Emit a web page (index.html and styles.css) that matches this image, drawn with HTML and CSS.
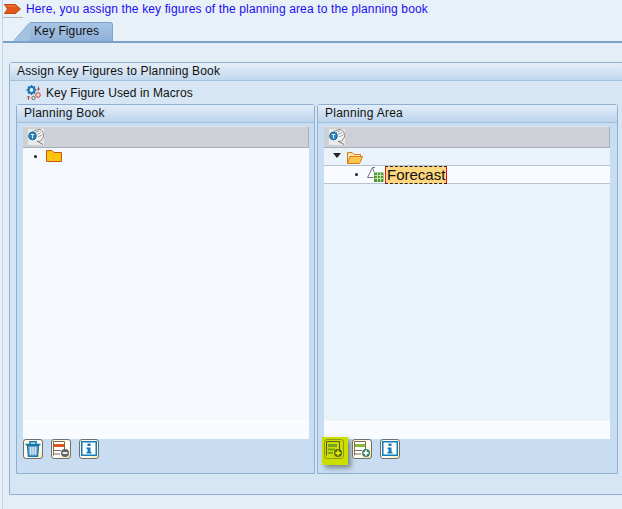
FILE: index.html
```html
<!DOCTYPE html>
<html lang="en">
  <head>
    <meta charset="UTF-8" />
    <title>Key Figures</title>
    <link rel="stylesheet" href="styles.css">
  </head>

  <body>
    <div class="message">
      <span class="message-mark">
        <svg width="17" height="10" viewBox="0 0 17 10"><path d="M0.5 0.5H11.5L16.5 5L11.5 9.5H0.5L3.5 5Z" fill="#e2571a" stroke="#c2470f"/><path d="M2.5 2H11" stroke="#f08a4a"/></svg>
      </span>
      <span class="message-text">Here, you assign the key figures of the planning area to the planning book</span>
    </div>

    <div class="tabs">
      <div class="tab">
        <svg class="tab-slope" width="16" height="19" viewBox="0 0 16 19"><path d="M0 19L16 1V19Z" fill="#a4c1e1"/><path d="M0 18.5L15.5 1" stroke="#7fa3ca" fill="none"/></svg>
        <span class="tab-label">Key Figures</span>
      </div>
    </div>

    <div class="tab-body">
      <div class="group">
        <div class="group-title">Assign Key Figures to Planning Book</div>
        <div class="group-tools">
          <svg width="16" height="16" viewBox="0 0 16 16">
            <circle cx="5.5" cy="5" r="3" fill="#e6f1f9" stroke="#1f78b4" stroke-width="2.2"/>
            <path d="M5.5 0V2M5.5 8V10M0.5 5H2.5M8.5 5H10.5M2 1.5L3.4 2.9M7.6 7.1L9 8.5M9 1.5L7.6 2.9M3.4 7.1L2 8.5" stroke="#1f78b4" stroke-width="1.5"/>
            <circle cx="12" cy="10" r="2.3" fill="#f6dcd6" stroke="#c8432c"/>
            <circle cx="7.5" cy="13" r="1.7" fill="none" stroke="#6f6a66"/>
            <path d="M12.5 1.5V5M11 3.6L12.5 5L14 3.6" fill="none" stroke="#c8432c"/>
            <path d="M2.5 11V15M1 12.5L2.5 11L4 12.5" fill="none" stroke="#c8432c"/>
          </svg>
          <span>Key Figure Used in Macros</span>
        </div>

        <div class="panels">
          <section class="panel">
            <div class="panel-title">Planning Book</div>
            <div class="tree">
              <div class="tree-head">
                <span class="tree-search">
                  <svg width="16" height="16" viewBox="0 0 16 16"><path d="M3 3.5L8 1L12 0.5L15 3L15.5 8L12.5 12L9 12.5" fill="#f4f4f4" stroke="#8b8b8b"/><path d="M7 3.5L11 2M9 5.5L13 3.5M10 8L14 6" stroke="#a5a5a5"/><path d="M9 12L15 15.5" stroke="#777"/><circle cx="4.5" cy="7" r="3.8" fill="#2f86c4" stroke="#1a5f94"/><path d="M2.8 5.5H6.2M4.5 5.5V9.5" stroke="#d7ecfa"/></svg>
                </span>
              </div>
              <div class="tree-rows">
                <div class="tree-row">
                  <span class="bullet"></span>
                  <svg class="folder" width="16" height="12" viewBox="0 0 16 12"><path d="M0.5 11.5V0.5H6L8 2.5H15.5V11.5Z" fill="#fbc50d" stroke="#c8551a"/></svg>
                </div>
              </div>
              <div class="tree-foot"></div>
            </div>
            <div class="actions">
              <button class="action">
                <svg width="16" height="16" viewBox="0 0 16 16"><path d="M0.5 3.5H15.5M5 3V0.8H11V3" fill="none" stroke="#0f76b0" stroke-width="1.5"/><path d="M2.5 4.5L3.5 15.2H12.5L13.5 4.5Z" fill="#86b4d6" stroke="#0f76b0" stroke-width="1.4"/><path d="M5.7 6V13.5M8 6V13.5M10.3 6V13.5" stroke="#eef6fb"/></svg>
              </button>
              <button class="action">
                <svg width="16" height="16" viewBox="0 0 16 16"><path d="M0.5 14.5V0.5H11.5V9" fill="#fff" stroke="#7a6a58"/><path d="M1 3H11V6H1Z" fill="#e0561c"/><path d="M1 9.5H8M1 13H7" stroke="#7a6a58"/><circle cx="12" cy="12" r="4" fill="#5e6468"/><path d="M9.6 12H14.4" stroke="#fff" stroke-width="1.8"/></svg>
              </button>
              <button class="action">
                <svg width="16" height="16" viewBox="0 0 16 16"><path d="M0.75 0.75H15.25V14.25H0.75Z" fill="#fff" stroke="#0f7cc0" stroke-width="1.5"/><path d="M6.5 2.5H9.5V5H6.5ZM5.5 6.5H9.5V11H10.5V12.5H5.5V11H6.5V8H5.5Z" fill="#0f7cc0"/></svg>
              </button>
            </div>
          </section>

          <section class="panel">
            <div class="panel-title">Planning Area</div>
            <div class="tree">
              <div class="tree-head">
                <span class="tree-search">
                  <svg width="16" height="16" viewBox="0 0 16 16"><path d="M3 3.5L8 1L12 0.5L15 3L15.5 8L12.5 12L9 12.5" fill="#f4f4f4" stroke="#8b8b8b"/><path d="M7 3.5L11 2M9 5.5L13 3.5M10 8L14 6" stroke="#a5a5a5"/><path d="M9 12L15 15.5" stroke="#777"/><circle cx="4.5" cy="7" r="3.8" fill="#2f86c4" stroke="#1a5f94"/><path d="M2.8 5.5H6.2M4.5 5.5V9.5" stroke="#d7ecfa"/></svg>
                </span>
              </div>
              <div class="tree-rows tree-rows-area">
                <div class="tree-row">
                  <span class="caret"></span>
                  <svg class="folder folder-open" width="16" height="12" viewBox="0 0 16 12"><path d="M0.5 11.5V0.5H5L7 2.5H13.5V4.5" fill="#fde9a8" stroke="#d9781f"/><path d="M0.5 11.5L3 4.5H15.5L12.5 11.5Z" fill="#fbc84a" stroke="#d9781f"/></svg>
                </div>
                <div class="tree-row tree-row-leaf">
                  <span class="bullet"></span>
                  <svg class="leaf-icon" width="17" height="16" viewBox="0 0 17 16"><path d="M0.5 10.5L5.5 0.5H8M5.5 0.5L7 5M0.5 10.5H6.5" fill="none" stroke="#777"/><path d="M7 5.5H16.5V15H7Z" fill="#4f9a35"/><path d="M7.5 8.5H16M7.5 11.5H16M10.5 6V14.5M13.5 6V14.5" stroke="#c5e3b3"/></svg>
                  <span class="selected">Forecast</span>
                </div>
              </div>
              <div class="tree-foot"></div>
            </div>
            <div class="actions">
              <span class="action-mark">
                <button class="action action-on">
                  <svg width="16" height="16" viewBox="0 0 16 16"><path d="M0.5 14.5V0.5H13.5V9" fill="none" stroke="#5a5a10"/><path d="M2 3H11V6H2Z" fill="#74a51c"/><path d="M2 7.5H9V9.5H2ZM2 11H7V13H2Z" fill="#74a51c"/><circle cx="12" cy="12" r="4" fill="#5a6a10"/><path d="M9.5 12H14.5M12 9.5V14.5" stroke="#e8f000" stroke-width="1.8"/></svg>
                </button>
              </span>
              <button class="action">
                <svg width="16" height="16" viewBox="0 0 16 16"><path d="M0.5 14.5V0.5H11.5V9" fill="#fff" stroke="#7a6a58"/><path d="M1 3H11V6H1Z" fill="#8cb83a"/><path d="M1 9.5H8M1 13H7" stroke="#7a6a58"/><circle cx="12" cy="12" r="4" fill="#3f8068"/><path d="M9.6 12H14.4M12 9.6V14.4" stroke="#fff" stroke-width="1.8"/></svg>
              </button>
              <button class="action">
                <svg width="16" height="16" viewBox="0 0 16 16"><path d="M0.75 0.75H15.25V14.25H0.75Z" fill="#fff" stroke="#0f7cc0" stroke-width="1.5"/><path d="M6.5 2.5H9.5V5H6.5ZM5.5 6.5H9.5V11H10.5V12.5H5.5V11H6.5V8H5.5Z" fill="#0f7cc0"/></svg>
              </button>
            </div>
          </section>
        </div>
      </div>
    </div>
  </body>
</html>
```

FILE: styles.css
```css
* {
  margin: 0;
  padding: 0;
  box-sizing: border-box;
  font-family: 'Liberation Sans', Arial, sans-serif;
}

html,
body {
  width: 622px;
  height: 509px;
  overflow: hidden;
}

body {
  background: #e9f1f8;
  border-left: 1px solid #c5d6e8;
  margin-left: 2px;
  color: #111;
  font-size: 12px;
}

.message {
  height: 18px;
  display: flex;
  align-items: center;
}

.message-mark {
  width: 20px;
  height: 18px;
  margin-right: 3px;
  padding: 4px 0 0 1px;
  border-bottom: 1px solid #b4b4b4;
  display: block;
}

.message-mark svg {
  display: block;
}

.message-text {
  color: #1a0ef0;
  font-size: 12px;
  letter-spacing: 0.13px;
}

.tabs {
  height: 23px;
  padding: 4px 0 0 11px;
  display: flex;
}

.tab {
  display: flex;
  height: 19px;
}

.tab-slope {
  display: block;
}

.tab-label {
  width: 83px;
  padding: 1px 0 0 4px;
  background: linear-gradient(#a8c5e4, #8eb1d8);
  border-top: 1px solid #7fa3ca;
  border-right: 1px solid #7fa3ca;
  border-top-right-radius: 3px;
  letter-spacing: 0.1px;
}

.tab-body {
  height: 468px;
  margin-left: -1px;
  padding: 19px 0 0 6px;
  background: #e4eef7;
  border-top: 2px solid #7ba1ca;
  border-left: 1px solid #8fb0d3;
}

.group {
  width: 640px;
  height: 433px;
  padding-bottom: 20px;
  background: #d6e6f4;
  border: 1px solid #8fb0d3;
  border-top-left-radius: 3px;
}

.group-title {
  height: 18px;
  padding: 1px 0 0 7px;
  background: linear-gradient(#e6eff8, #c2d8ee);
  border-bottom: 1px solid #a3c0de;
  letter-spacing: 0.16px;
}

.group-tools {
  height: 23px;
  padding-left: 16px;
  display: flex;
  align-items: center;
  gap: 4px;
  letter-spacing: 0.08px;
}

.panels {
  display: flex;
  gap: 2px;
  padding-left: 6px;
}

.panel {
  width: 299px;
  height: 370px;
  padding: 0 6px;
  background: #c8ddf2;
  border: 1px solid #8fb0d3;
  border-top-left-radius: 3px;
  border-top-right-radius: 3px;
}

.panel + .panel {
  width: 301px;
}

.panel-title {
  margin: 0 -6px;
  height: 18px;
  padding: 1px 0 0 7px;
  background: linear-gradient(#e2edf8, #bdd4ec);
  border-bottom: 1px solid #a3c0de;
  letter-spacing: 0.25px;
}

.tree {
  margin-top: 3px;
  width: 286px;
  height: 313px;
  display: flex;
  flex-direction: column;
}

.tree-head {
  height: 22px;
  padding: 0 0 0 5px;
  background: #cdd1d6;
  border-top: 1px solid #dfe2e6;
  border-bottom: 1px solid #a4b2c0;
  border-right: 1px solid #a4b2c0;
  display: flex;
  align-items: center;
}

.tree-search {
  display: block;
  height: 16px;
  background: #e8eaec;
}

.tree-search svg {
  display: block;
}

.tree-rows {
  flex: 1;
  background: #f6f9fe;
}

.tree-rows-area {
  background: #eaf2fa;
}

.tree-foot {
  height: 18px;
  background: #f8fbff;
  border-top: 1px solid #fff;
}

.tree-row {
  height: 17px;
  padding-left: 11px;
  display: flex;
  align-items: center;
}

.bullet {
  width: 3px;
  height: 3px;
  margin-right: 9px;
  background: #222;
  border-radius: 50%;
}

.caret {
  width: 0;
  height: 0;
  margin-left: -2px;
  margin-right: 6px;
  margin-bottom: 3px;
  border-left: 4px solid transparent;
  border-right: 4px solid transparent;
  border-top: 5px solid #222;
}

.folder {
  display: block;
  align-self: flex-start;
  margin-top: 2px;
}

.folder-open {
  margin-top: 4px;
}

.tree-row-leaf {
  height: 19px;
  padding-left: 31px;
  background: #f8fbff;
  border-top: 1px solid #b6c2ce;
  border-bottom: 1px solid #b6c2ce;
}

.leaf-icon {
  display: block;
}

.selected {
  margin-left: 1px;
  height: 18px;
  padding: 0 1px;
  background: #fdd67e;
  border: 1px dashed #222;
  border-left: 1px solid #e8101c;
  border-right: 1px solid #e8101c;
  font-size: 15px;
  line-height: 16px;
}

.actions {
  height: 34px;
  display: flex;
  gap: 8px;
  align-items: flex-start;
}

.action {
  width: 20px;
  height: 20px;
  display: flex;
  align-items: center;
  justify-content: center;
  background: linear-gradient(135deg, #fff6d2, #fffdf2 60%, #fbe9a8);
  border: 1px solid #6f6f6f;
  border-radius: 3px;
}

.action svg {
  display: block;
}

.action-mark {
  margin: -2px -4px 0 -2px;
  padding: 2px;
  width: 26px;
  height: 28px;
  background: #ccdd00;
  box-shadow: 3px 3px 5px rgba(60, 70, 50, 0.55);
}

.action-on {
  background: #ccdd00;
  border-color: #8f9a20;
}
```
